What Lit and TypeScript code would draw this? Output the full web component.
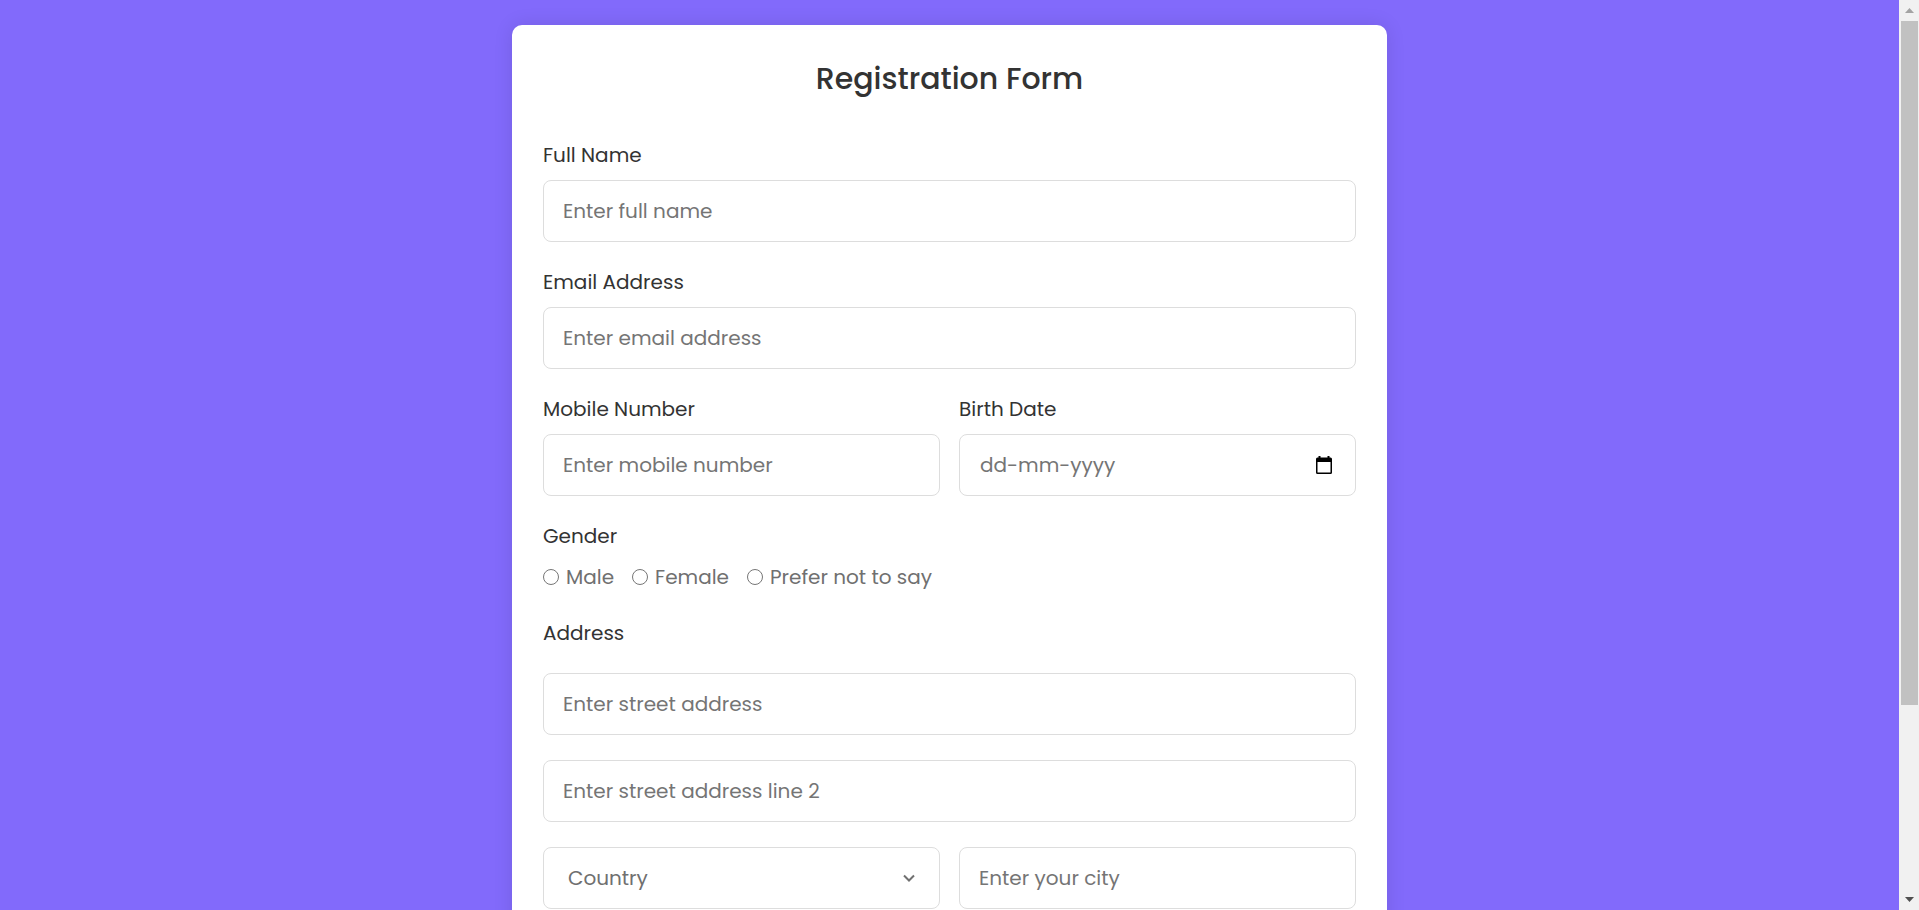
import { LitElement, html, css } from "lit";
import { customElement } from "lit/decorators.js";

@customElement("app-root")
export class AppRoot extends LitElement {
  static styles = css`
    :host {
      display: grid;
      grid-template-columns: minmax(0, 1fr) 20px;
      height: 100vh;
      overflow: hidden;
      background: #826afb;
      font-family: Poppins, Inter, "Open Sans", sans-serif;
      font-size: 20px;
      line-height: 30px;
      color: #333;
    }
    * {
      box-sizing: border-box;
    }
    .page {
      min-height: 0;
      padding: 25px;
      overflow: auto;
      scrollbar-width: none;
    }
    .card {
      max-width: 875px;
      margin: 0 auto;
      padding: 31px;
      background: #fff;
      border-radius: 10px;
      box-shadow: 0 0 19px rgba(0, 0, 0, 0.1);
    }
    .title {
      margin: 0 0 38px;
      font-size: 30px;
      line-height: 46px;
      font-weight: 500;
      text-align: center;
    }
    .form,
    .address {
      display: grid;
      gap: 25px;
    }
    .field {
      display: grid;
      gap: 10px;
      min-width: 0;
    }
    .row {
      display: grid;
      grid-template-columns: 1fr 1fr;
      gap: 19px;
    }
    .group {
      min-width: 0;
      margin: 0;
      padding: 0;
      border: 0;
    }
    .legend {
      display: block;
      padding: 0;
    }
    .box {
      width: 100%;
      min-width: 0;
      height: 62px;
      margin: 0;
      padding: 0 19px;
      border: 1px solid #ddd;
      border-radius: 8px;
      background: #fff;
      color: #707070;
      font: inherit;
      outline: none;
    }
    .box:focus,
    .date:focus-within {
      border-color: #826afb;
    }
    input::placeholder {
      color: #757575;
      opacity: 1;
    }
    .date {
      display: flex;
      align-items: center;
    }
    .date-input {
      flex: 1;
      min-width: 0;
      padding: 0 1px;
      border: 0;
      background: none;
      color: inherit;
      font: inherit;
      outline: none;
    }
    .calendar {
      display: grid;
      place-items: center;
      width: 24px;
      height: 24px;
      padding: 0;
      border: 0;
      background: none;
      color: #000;
      cursor: pointer;
    }
    .choices {
      display: flex;
      flex-wrap: wrap;
      gap: 0 18px;
      margin-top: 10px;
      color: #707070;
    }
    .choice {
      display: flex;
      align-items: center;
      gap: 7px;
      height: 32px;
    }
    .radio {
      appearance: none;
      width: 16px;
      height: 16px;
      margin: 0;
      border: 1px solid #767676;
      border-radius: 50%;
      background: #fff;
    }
    .radio:checked {
      border: 5px solid #826afb;
    }
    .select {
      display: grid;
      align-items: center;
    }
    .select > * {
      grid-area: 1 / 1;
    }
    .country {
      appearance: none;
      padding: 0 24px;
    }
    .chevron {
      justify-self: end;
      margin-right: 25px;
      pointer-events: none;
    }
    .scrollbar {
      display: grid;
      grid-template-rows: 21px minmax(0, 1fr) 21px;
      justify-items: center;
      padding: 0 1px 0 2px;
      background: #f1f1f1;
    }
    .thumb {
      width: 100%;
      height: 78.8%;
      background: #c1c1c1;
    }
    .arrow {
      align-self: center;
    }
  `;

  private field(id: string, label: string, placeholder: string, type = "text") {
    return html`
      <div class="field">
        <label for=${id}>${label}</label>
        <input class="box" id=${id} type=${type} placeholder=${placeholder} />
      </div>
    `;
  }

  private choice(id: string, label: string) {
    return html`
      <label class="choice" for=${id}>
        <input class="radio" id=${id} type="radio" name="gender" />${label}
      </label>
    `;
  }

  render() {
    return html`
      <main class="page">
        <section class="card">
          <h1 class="title">Registration Form</h1>
          <form class="form">
            ${this.field("name", "Full Name", "Enter full name")}
            ${this.field("email", "Email Address", "Enter email address", "email")}
            <div class="row">
              ${this.field("mobile", "Mobile Number", "Enter mobile number", "tel")}
              <div class="field">
                <label for="birth">Birth Date</label>
                <div class="box date">
                  <input class="date-input" id="birth" type="text" placeholder="dd-mm-yyyy" />
                  <button class="calendar" type="button" aria-label="Choose date">
                    <svg width="16" height="18" viewBox="0 0 16 18" aria-hidden="true">
                      <path
                        fill="currentColor"
                        fill-rule="evenodd"
                        d="M2.5 0h2v1.5h7V0h2v1.5h1A1.5 1.5 0 0 1 16 3v13.5a1.5 1.5 0 0 1-1.5 1.5h-13A1.5 1.5 0 0 1 0 16.5V3a1.5 1.5 0 0 1 1.5-1.5h1zM1.5 6v10.500h13V6z"
                      />
                    </svg>
                  </button>
                </div>
              </div>
            </div>
            <fieldset class="group">
              <legend class="legend">Gender</legend>
              <div class="choices">
                ${this.choice("male", "Male")} ${this.choice("female", "Female")}
                ${this.choice("other", "Prefer not to say")}
              </div>
            </fieldset>
            <div class="address">
              <label for="street">Address</label>
              <input class="box" id="street" type="text" placeholder="Enter street address" />
              <input
                class="box"
                type="text"
                aria-label="Street address line 2"
                placeholder="Enter street address line 2"
              />
              <div class="row">
                <div class="select">
                  <select class="box country" aria-label="Country">
                    <option>Country</option>
                  </select>
                  <svg class="chevron" width="12" height="8" viewBox="0 0 12 8" aria-hidden="true">
                    <path d="M1 1.500 6 6.500l5-5" fill="none" stroke="#707070" stroke-width="2" />
                  </svg>
                </div>
                <input class="box" type="text" aria-label="City" placeholder="Enter your city" />
              </div>
            </div>
          </form>
        </section>
      </main>
      <div class="scrollbar" aria-hidden="true">
        <svg class="arrow" width="9" height="5" viewBox="0 0 9 5"><path d="M4.500 0 9 5H0z" fill="#a3a3a3" /></svg>
        <div class="thumb"></div>
        <svg class="arrow" width="9" height="5" viewBox="0 0 9 5"><path d="M0 0h9L4.500 5z" fill="#505050" /></svg>
      </div>
    `;
  }
}
